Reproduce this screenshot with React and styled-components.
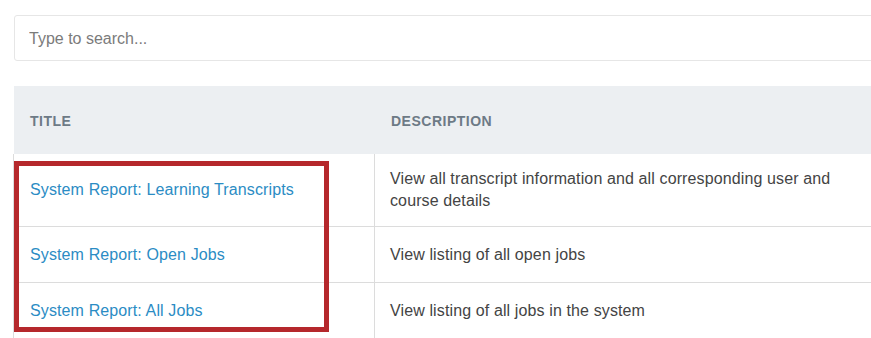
import styled, { createGlobalStyle } from "styled-components";

const reports = [
  {
    title: "System Report: Learning Transcripts",
    description:
      "View all transcript information and all corresponding user and course details",
  },
  {
    title: "System Report: Open Jobs",
    description: "View listing of all open jobs",
  },
  {
    title: "System Report: All Jobs",
    description: "View listing of all jobs in the system",
  },
];

const App = () => {
  return (
    <>
      <GlobalStyle />
      <Page>
        <SearchInput type="text" placeholder="Type to search..." />
        <Table>
          <HeadRow>
            <HeadCell>Title</HeadCell>
            <HeadCell>Description</HeadCell>
          </HeadRow>
          <Body>
            {reports.map((r) => (
              <Row key={r.title}>
                <TitleCell>
                  <ReportLink href="#">{r.title}</ReportLink>
                </TitleCell>
                <DescCell>{r.description}</DescCell>
              </Row>
            ))}
            <Highlight />
          </Body>
        </Table>
      </Page>
    </>
  );
};

const GlobalStyle = createGlobalStyle`
  html, body {
    margin: 0;
    padding: 0;
    background: #fff;
    overflow: hidden;
  }
  body {
    font-family: "Liberation Sans", Arial, sans-serif;
  }
`;

const Page = styled.div`
  width: 871px;
  height: 338px;
  padding: 15px 0 0 14px;
  box-sizing: border-box;
  overflow: hidden;
`;

const SearchInput = styled.input`
  display: block;
  width: 900px;
  height: 46px;
  box-sizing: border-box;
  padding: 2px 14px 0;
  border: 1px solid #e6e6e6;
  border-radius: 3px;
  font-family: "Liberation Sans", Arial, sans-serif;
  font-size: 16px;
  color: #333;

  &::placeholder {
    color: #7b7b7b;
  }

  &:focus {
    outline: none;
  }
`;

const Table = styled.div`
  margin-top: 25px;
  width: 900px;
`;

const HeadRow = styled.div`
  display: grid;
  grid-template-columns: 361px 1fr;
  height: 68px;
  align-items: center;
  background: #eceff2;
`;

const HeadCell = styled.div`
  padding: 2px 16px 0;
  font-size: 14px;
  font-weight: 700;
  text-transform: uppercase;
  letter-spacing: 0.5px;
  color: #6d7a86;
`;

const Body = styled.div`
  position: relative;
  border-left: 1px solid #dcdcdc;
  margin-left: -1px;
`;

const Row = styled.div`
  display: grid;
  grid-template-columns: 361px 1fr;
  min-height: 55px;
  border-bottom: 1px solid #dcdcdc;
  font-size: 16px;
  line-height: 22px;
  letter-spacing: 0.12px;
`;

const TitleCell = styled.div`
  display: flex;
  align-items: center;
  padding: 14px 16px;
  border-right: 1px solid #dcdcdc;
`;

const DescCell = styled.div`
  display: flex;
  align-items: center;
  padding: 14px 60px 14px 15px;
  color: #444;
`;

const ReportLink = styled.a`
  color: #2b8cc4;
  text-decoration: none;
`;

const Highlight = styled.div`
  position: absolute;
  left: 0;
  top: 7px;
  width: 315px;
  height: 171px;
  box-sizing: border-box;
  border: 5px solid #b5282c;
  pointer-events: none;
`;

export default App;
